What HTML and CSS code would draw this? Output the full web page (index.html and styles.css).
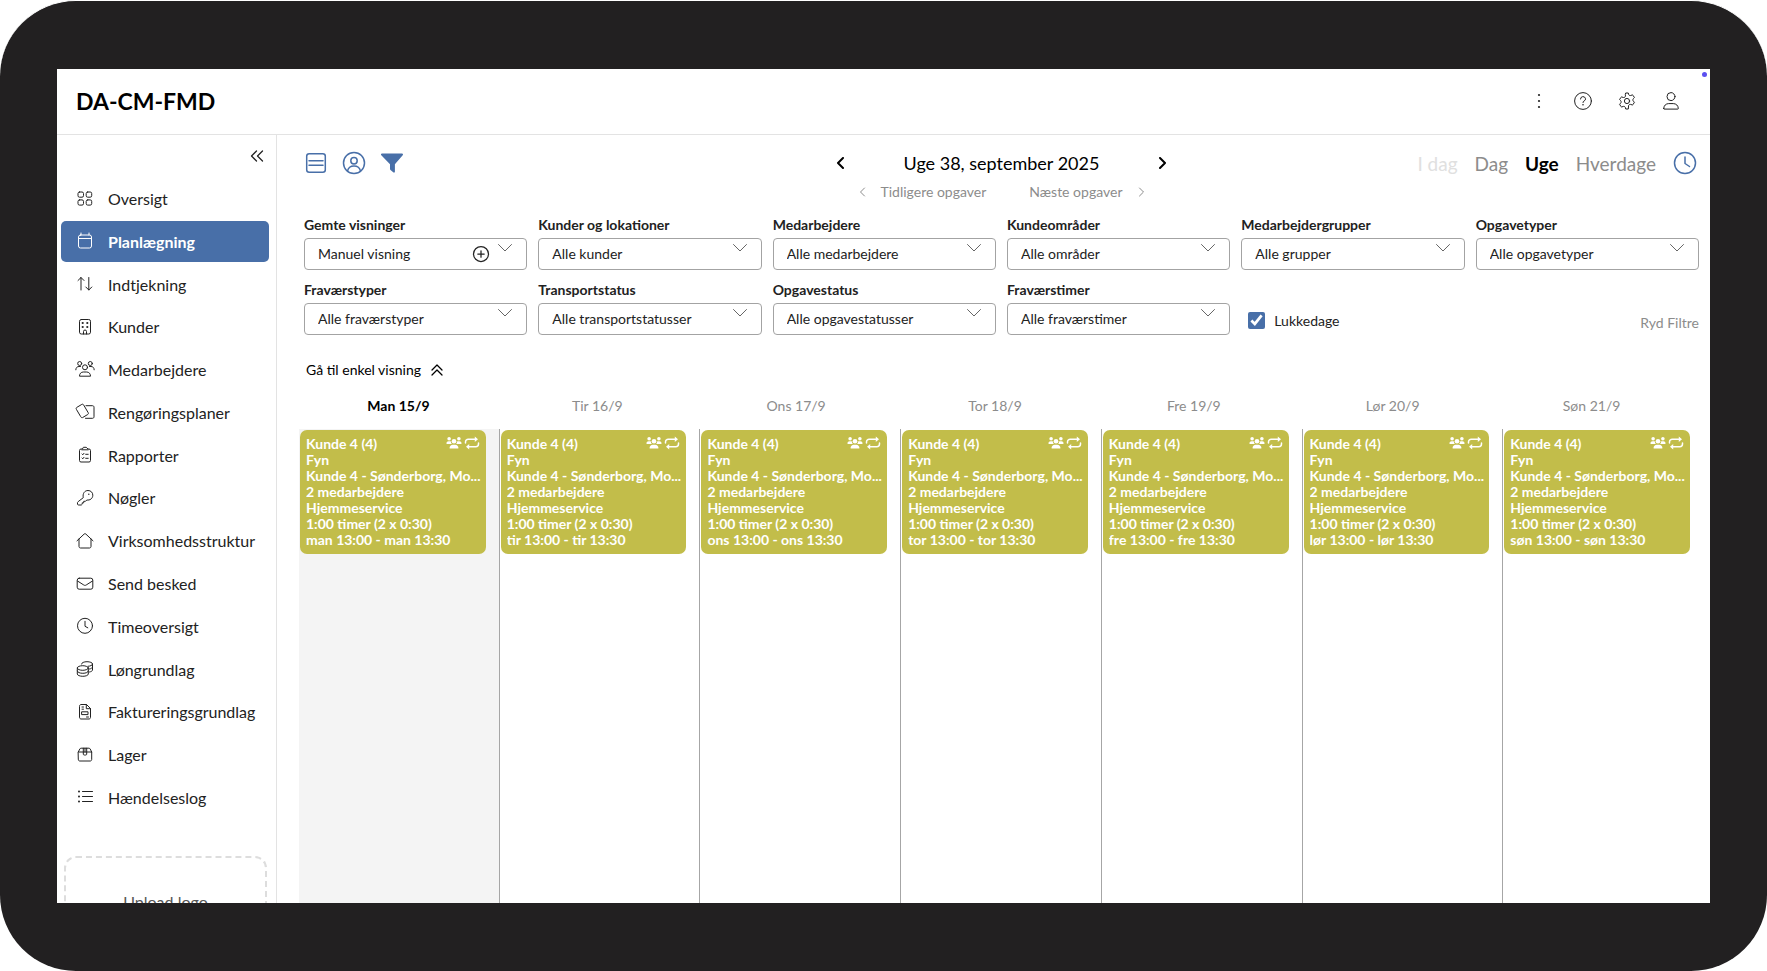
FILE: index.html
```html
<!DOCTYPE html>
<html lang="da">
<head>
  <meta charset="UTF-8">
  <meta name="viewport" content="width=device-width, initial-scale=1.0">
  <title>DA-CM-FMD - Planlægning</title>
  <link rel="stylesheet" href="styles.css">
</head>
<body>
  <!-- Shared icons -->
  <svg class="sprite" aria-hidden="true">
    <symbol id="chevron" viewBox="0 0 16 10"><path d="M1.500 1.500 8 8l6.500-6.500"/></symbol>
    <symbol id="clock" viewBox="0 0 24 24"><circle cx="12" cy="12" r="10.500"/><path d="M12 6v6.500l4.500 3"/></symbol>
    <symbol id="group" viewBox="0 0 18 14">
      <circle cx="3.500" cy="2.300" r="2"/><circle cx="14.500" cy="2.300" r="2"/><circle cx="9" cy="5" r="2.600"/>
      <path d="M.5 7.500C.5 6 1.500 5 3 5h1.300c.5 0 .9.1 1.200.3C5.600 6.500 6 7.400 6.600 8H1a.5.5 0 0 1-.5-.5zM17.500 7.500C17.500 6 16.500 5 15 5h-1.300c-.5 0-.9.1-1.200.3-.1 1.200-.5 2.100-1.100 2.700H17a.5.5 0 0 0 .5-.5zM4 12.500c0-2 1.600-3.600 3.600-3.600h2.800c2 0 3.600 1.600 3.600 3.600 0 .5-.3.800-.8.800H4.800c-.5 0-.8-.3-.8-.8z"/>
    </symbol>
    <symbol id="repeat" viewBox="0 0 16 14">
      <path class="line" d="M1.500 7V6c0-1.600 1.200-2.700 2.700-2.700h7.300M14.500 7v1c0 1.600-1.200 2.700-2.700 2.700H4.500"/>
      <path d="M10.800.5 14 3.300l-3.200 2.800zM5.200 7.900 2 10.700l3.200 2.800z"/>
    </symbol>
  </svg>

  <div class="device">
    <div class="screen">
      <header class="topbar">
        <h1>DA-CM-FMD</h1>
        <div class="topbar-actions">
          <button type="button" aria-label="Mere"><svg viewBox="0 0 20 20"><g class="solid"><circle cx="10" cy="4" r="1.100"/><circle cx="10" cy="10" r="1.100"/><circle cx="10" cy="16" r="1.100"/></g></svg></button>
          <button type="button" aria-label="Hjælp"><svg viewBox="0 0 20 20"><circle cx="10" cy="10" r="8.400"/><path d="M7.500 8a2.500 2.300 0 1 1 3.600 2c-.8.4-1.100.8-1.100 1.500"/><circle class="solid" cx="10" cy="13.800" r=".8"/></svg></button>
          <button type="button" aria-label="Indstillinger"><svg viewBox="0 0 20 20"><circle cx="10" cy="10" r="2.600"/><path d="M8.400 3.300 8.700 2h2.600l.3 1.300c.2.900 1.100 1.500 2 1.200l1.500-.5c.4-.1.800 0 1 .4l1.300 2.200-1 1c-.7.700-.7 1.900 0 2.600l1 1-1.300 2.300c-.2.300-.6.500-1 .4l-1.500-.5c-.9-.2-1.800.3-2 1.200L11.300 18H8.700l-.3-1.400c-.2-.9-1.100-1.400-2-1.200l-1.500.5c-.4.100-.8-.1-1-.4l-1.300-2.300 1-1c.7-.7.7-1.900 0-2.600l-1-1 1.300-2.200c.2-.4.600-.5 1-.4l1.500.5c.9.300 1.800-.3 2-1.200z"/></svg></button>
          <button type="button" aria-label="Profil"><svg viewBox="0 0 20 20"><circle cx="10" cy="5.600" r="4"/><path d="M2.700 17.600c0-3 2.200-5 5-5h4.600c2.800 0 5 2 5 5 0 .3-.2.500-.5.500H3.200c-.3 0-.5-.2-.5-.5z"/></svg></button>
        </div>
        <span class="status-dot"></span>
      </header>

      <div class="body">
        <aside class="sidebar">
          <button type="button" class="collapse" aria-label="Skjul menu"><svg viewBox="0 0 14 12"><path d="M6.500 1 1.500 6l5 5M12.500 1l-5 5 5 5"/></svg></button>
          <nav class="menu">
            <a href="#"><svg viewBox="0 0 20 20"><rect x="3" y="3" width="5.500" height="5.200" rx="1.500"/><rect x="11.200" y="3" width="5.500" height="5.200" rx="1.500"/><rect x="3" y="10.900" width="5.500" height="5.200" rx="1.500"/><rect x="11.200" y="10.900" width="5.500" height="5.200" rx="1.500"/></svg>Oversigt</a>
            <a href="#" class="active"><svg viewBox="0 0 20 20"><rect x="3.500" y="4" width="13" height="13" rx="2"/><path d="M3.500 7.500h13M6 2v2M14 2v2"/></svg>Planlægning</a>
            <a href="#"><svg viewBox="0 0 20 20"><path d="M6 16V3.500M3 6.500l3-3 3 3M13.800 3.500V16M10.800 13l3 3 3-3"/></svg>Indtjekning</a>
            <a href="#"><svg viewBox="0 0 20 20"><rect x="4.500" y="2.500" width="11" height="14.500" rx="1.800"/><path d="M8.500 17v-2.500a1.500 1.500 0 0 1 3 0V17"/><g class="solid"><circle cx="7.700" cy="6" r="1.100"/><circle cx="12.300" cy="6" r="1.100"/><circle cx="7.700" cy="10" r="1.100"/><circle cx="12.300" cy="10" r="1.100"/></g></svg>Kunder</a>
            <a href="#"><svg viewBox="0 0 20 20"><circle cx="4.700" cy="3.500" r="2"/><circle cx="15.300" cy="3.500" r="2"/><circle cx="10" cy="7.300" r="2.500"/><path d="M.8 9.800c0-2 1.300-3.300 3.200-3.300h1.500M19.200 9.800c0-2-1.300-3.300-3.200-3.300h-1.500M4.500 15.800c0-2 1.500-3.800 3.800-3.800h3.400c2.300 0 3.800 1.800 3.800 3.800z"/></svg>Medarbejdere</a>
            <a href="#"><svg viewBox="0 0 20 20"><path d="M1.300 7.200c-.4-.7-.2-1.400.5-1.800l5-3c.7-.4 1.400-.2 1.800.5l4.600 7.800c.4.700.2 1.400-.5 1.800l-5 3c-.7.400-1.400.2-1.800-.5zM11 3.700h6.500c.9 0 1.500.6 1.500 1.500v9.600c0 .9-.6 1.500-1.500 1.500h-7"/></svg>Rengøringsplaner</a>
            <a href="#"><svg viewBox="0 0 20 20"><path d="M7 4H6a1.500 1.500 0 0 0-1.500 1.500v10A1.500 1.500 0 0 0 6 17h8a1.500 1.500 0 0 0 1.500-1.500v-10A1.500 1.500 0 0 0 14 4h-1l-1.800-1.700h-2.400zM6.800 4.800h6.400M7 9l.8.800L9 8.300M7 13l.8.800L9 12.300M10.700 9.300h2.500M10.700 13.300h2.500"/></svg>Rapporter</a>
            <a href="#"><svg viewBox="0 0 20 20"><path d="M8.200 9.300c-.8-3.800 1.500-6.800 4.800-6.800 2.800 0 4.800 2 4.800 4.700 0 3.300-2.800 5.300-6 4.800l-1.300 1.300H8.700v1.500H7.200v1.400l-.9.800H3.500c-.6 0-1-.4-1-1v-1.200c0-.4.100-.6.400-.9z"/><circle class="solid" cx="13.800" cy="6.300" r=".7"/></svg>Nøgler</a>
            <a href="#"><svg viewBox="0 0 20 20"><path d="M2 9.800 9.200 3c.5-.4 1.100-.4 1.600 0L18 9.800M4 8v7.500c0 .8.700 1.500 1.500 1.500h9c.8 0 1.500-.7 1.500-1.500V8"/></svg>Virksomhedsstruktur</a>
            <a href="#"><svg viewBox="0 0 20 20"><rect x="2.200" y="4.200" width="15.600" height="11" rx="2"/><path d="m2.500 7 6.300 4c.8.500 1.600.5 2.400 0l6.300-4"/></svg>Send besked</a>
            <a href="#"><svg viewBox="0 0 20 20"><circle cx="10" cy="9.800" r="7.500"/><path d="M10 5.300v5l2.800 1.500"/></svg>Timeoversigt</a>
            <a href="#"><svg viewBox="0 0 20 20"><ellipse cx="7.800" cy="9" rx="5.500" ry="2.300"/><path d="M2.300 9v6c0 1.300 2.500 2.300 5.500 2.300s5.500-1 5.500-2.300V9M2.300 12c0 1.300 2.500 2.300 5.500 2.300s5.500-1 5.500-2.300M6.500 5c0-1.300 2.500-2.300 5.500-2.300s5.500 1 5.500 2.300-2.300 2.200-4.500 2.300M17.500 5v6c0 .9-1.200 1.700-3 2M17.500 8c0 .9-1.200 1.700-3 2"/></svg>Løngrundlag</a>
            <a href="#"><svg viewBox="0 0 20 20"><path d="M4.500 4c0-.8.700-1.500 1.500-1.500h5.500l4 4V15.500c0 .8-.7 1.500-1.500 1.500H6c-.8 0-1.500-.7-1.500-1.500zM11.300 2.500v4.200h4.200M7 5h1.500M7 7.200h1.500M11.500 15h2"/><rect x="7" y="9.800" width="6" height="2.800"/></svg>Faktureringsgrundlag</a>
            <a href="#"><svg viewBox="0 0 20 20"><path d="M3.300 7 4.800 4c.3-.6.700-.8 1.300-.8h7.800c.6 0 1 .2 1.300.8l1.500 3v7.500c0 .9-.7 1.500-1.500 1.500H4.800c-.9 0-1.500-.6-1.500-1.500zM3.300 7h13.400M8.300 3.200v6c0 .5.400.8 1 .8h1.400c.6 0 1-.3 1-.8v-6M10 3.200V7"/></svg>Lager</a>
            <a href="#"><svg viewBox="0 0 20 20"><path d="M7.500 4.500h10M7.500 9.500h10M7.500 14.500h10"/><g class="solid"><circle cx="4" cy="4.500" r="1"/><circle cx="4" cy="9.500" r="1"/><circle cx="4" cy="14.500" r="1"/></g></svg>Hændelseslog</a>
          </nav>
          <button type="button" class="upload">Upload logo</button>
        </aside>

        <main class="main">
          <div class="toolbar">
            <div class="tools">
              <button type="button" aria-label="Listevisning"><svg viewBox="0 0 24 24"><rect x="2.700" y="2.700" width="18.600" height="18.600" rx="2.500"/><path d="M5 9.800h14M5 14.200h14"/></svg></button>
              <button type="button" aria-label="Medarbejdervisning"><svg viewBox="0 0 24 24"><circle cx="12" cy="12" r="10.500"/><circle cx="12" cy="9.800" r="3.200"/><path d="M5.500 20c.7-3.200 3-5 6.500-5s5.800 1.800 6.500 5"/></svg></button>
              <button type="button" aria-label="Filter"><svg viewBox="0 0 24 24"><path class="solid" d="M2 2.500h20c1 0 1.300 1 .7 1.700l-7.800 9v7.500c0 .8-.8 1.200-1.400.7l-3-2.400a1.500 1.500 0 0 1-.5-1.100v-4.700L1.300 4.200C.7 3.500 1 2.500 2 2.500z"/></svg></button>
            </div>
            <div class="period">
              <div class="period-week">
                <button type="button" aria-label="Forrige uge"><svg viewBox="0 0 8 12"><path d="M6.500 1 1.500 6l5 5"/></svg></button>
                <h2>Uge 38, september 2025</h2>
                <button type="button" aria-label="Næste uge"><svg viewBox="0 0 8 12"><path d="m1.500 1 5 5-5 5"/></svg></button>
              </div>
              <div class="period-tasks">
                <button type="button"><svg viewBox="0 0 8 12"><path d="m6.500 2-4 4 4 4"/></svg>Tidligere opgaver</button>
                <button type="button">Næste opgaver<svg viewBox="0 0 8 12"><path d="m1.500 2 4 4-4 4"/></svg></button>
              </div>
            </div>
            <div class="ranges">
              <button type="button" disabled>I dag</button>
              <button type="button">Dag</button>
              <button type="button" class="active">Uge</button>
              <button type="button">Hverdage</button>
              <button type="button" class="range-clock" aria-label="Tid"><svg><use href="#clock"/></svg></button>
            </div>
          </div>

          <form class="filters">
            <div class="filter">
              <label for="views">Gemte visninger</label>
              <div class="select">
                <select id="views"><option>Manuel visning</option></select>
                <button type="button" class="add" aria-label="Gem visning"><svg viewBox="0 0 18 18"><circle cx="9" cy="9" r="7.500"/><path d="M9 5.800v6.400M5.800 9h6.400"/></svg></button>
                <svg class="arrow"><use href="#chevron"/></svg>
              </div>
            </div>
            <div class="filter">
              <label for="customers">Kunder og lokationer</label>
              <div class="select"><select id="customers"><option>Alle kunder</option></select><svg class="arrow"><use href="#chevron"/></svg></div>
            </div>
            <div class="filter">
              <label for="employees">Medarbejdere</label>
              <div class="select"><select id="employees"><option>Alle medarbejdere</option></select><svg class="arrow"><use href="#chevron"/></svg></div>
            </div>
            <div class="filter">
              <label for="areas">Kundeområder</label>
              <div class="select"><select id="areas"><option>Alle områder</option></select><svg class="arrow"><use href="#chevron"/></svg></div>
            </div>
            <div class="filter">
              <label for="groups">Medarbejdergrupper</label>
              <div class="select"><select id="groups"><option>Alle grupper</option></select><svg class="arrow"><use href="#chevron"/></svg></div>
            </div>
            <div class="filter">
              <label for="tasktypes">Opgavetyper</label>
              <div class="select"><select id="tasktypes"><option>Alle opgavetyper</option></select><svg class="arrow"><use href="#chevron"/></svg></div>
            </div>
            <div class="filter">
              <label for="absence">Fraværstyper</label>
              <div class="select"><select id="absence"><option>Alle fraværstyper</option></select><svg class="arrow"><use href="#chevron"/></svg></div>
            </div>
            <div class="filter">
              <label for="transport">Transportstatus</label>
              <div class="select"><select id="transport"><option>Alle transportstatusser</option></select><svg class="arrow"><use href="#chevron"/></svg></div>
            </div>
            <div class="filter">
              <label for="taskstatus">Opgavestatus</label>
              <div class="select"><select id="taskstatus"><option>Alle opgavestatusser</option></select><svg class="arrow"><use href="#chevron"/></svg></div>
            </div>
            <div class="filter">
              <label for="hours">Fraværstimer</label>
              <div class="select"><select id="hours"><option>Alle fraværstimer</option></select><svg class="arrow"><use href="#chevron"/></svg></div>
            </div>
            <label class="check"><input type="checkbox" checked>Lukkedage</label>
            <button type="reset" class="clear">Ryd Filtre</button>
          </form>

          <button type="button" class="simple-view">Gå til enkel visning<svg viewBox="0 0 12 14"><path d="m1 7 5-5 5 5M1 12l5-5 5 5"/></svg></button>

          <div class="week-head">
            <h3 class="today">Man 15/9</h3>
            <h3>Tir 16/9</h3>
            <h3>Ons 17/9</h3>
            <h3>Tor 18/9</h3>
            <h3>Fre 19/9</h3>
            <h3>Lør 20/9</h3>
            <h3>Søn 21/9</h3>
          </div>
          <div class="week">
            <div class="lane today">
              <article class="task">
                <div class="task-icons"><svg><use href="#group"/></svg><svg><use href="#repeat"/></svg></div>
                <p>Kunde 4 (4)</p>
                <p>Fyn</p>
                <p>Kunde 4 - Sønderborg, Mo...</p>
                <p>2 medarbejdere</p>
                <p>Hjemmeservice</p>
                <p>1:00 timer (2 x 0:30)</p>
                <p>man 13:00 - man 13:30</p>
              </article>
            </div>
            <div class="lane">
              <article class="task">
                <div class="task-icons"><svg><use href="#group"/></svg><svg><use href="#repeat"/></svg></div>
                <p>Kunde 4 (4)</p>
                <p>Fyn</p>
                <p>Kunde 4 - Sønderborg, Mo...</p>
                <p>2 medarbejdere</p>
                <p>Hjemmeservice</p>
                <p>1:00 timer (2 x 0:30)</p>
                <p>tir 13:00 - tir 13:30</p>
              </article>
            </div>
            <div class="lane">
              <article class="task">
                <div class="task-icons"><svg><use href="#group"/></svg><svg><use href="#repeat"/></svg></div>
                <p>Kunde 4 (4)</p>
                <p>Fyn</p>
                <p>Kunde 4 - Sønderborg, Mo...</p>
                <p>2 medarbejdere</p>
                <p>Hjemmeservice</p>
                <p>1:00 timer (2 x 0:30)</p>
                <p>ons 13:00 - ons 13:30</p>
              </article>
            </div>
            <div class="lane">
              <article class="task">
                <div class="task-icons"><svg><use href="#group"/></svg><svg><use href="#repeat"/></svg></div>
                <p>Kunde 4 (4)</p>
                <p>Fyn</p>
                <p>Kunde 4 - Sønderborg, Mo...</p>
                <p>2 medarbejdere</p>
                <p>Hjemmeservice</p>
                <p>1:00 timer (2 x 0:30)</p>
                <p>tor 13:00 - tor 13:30</p>
              </article>
            </div>
            <div class="lane">
              <article class="task">
                <div class="task-icons"><svg><use href="#group"/></svg><svg><use href="#repeat"/></svg></div>
                <p>Kunde 4 (4)</p>
                <p>Fyn</p>
                <p>Kunde 4 - Sønderborg, Mo...</p>
                <p>2 medarbejdere</p>
                <p>Hjemmeservice</p>
                <p>1:00 timer (2 x 0:30)</p>
                <p>fre 13:00 - fre 13:30</p>
              </article>
            </div>
            <div class="lane">
              <article class="task">
                <div class="task-icons"><svg><use href="#group"/></svg><svg><use href="#repeat"/></svg></div>
                <p>Kunde 4 (4)</p>
                <p>Fyn</p>
                <p>Kunde 4 - Sønderborg, Mo...</p>
                <p>2 medarbejdere</p>
                <p>Hjemmeservice</p>
                <p>1:00 timer (2 x 0:30)</p>
                <p>lør 13:00 - lør 13:30</p>
              </article>
            </div>
            <div class="lane">
              <article class="task">
                <div class="task-icons"><svg><use href="#group"/></svg><svg><use href="#repeat"/></svg></div>
                <p>Kunde 4 (4)</p>
                <p>Fyn</p>
                <p>Kunde 4 - Sønderborg, Mo...</p>
                <p>2 medarbejdere</p>
                <p>Hjemmeservice</p>
                <p>1:00 timer (2 x 0:30)</p>
                <p>søn 13:00 - søn 13:30</p>
              </article>
            </div>
          </div>
        </main>
      </div>
    </div>
  </div>
</body>
</html>
```

FILE: styles.css
```css
* {
  box-sizing: border-box;
}

body {
  font-family: Lato, "Open Sans", sans-serif;
  color: #222;
  background-color: #fff;
  margin: 0;
}

h1, h2, h3, p {
  margin: 0;
}

button, select, input {
  font: inherit;
  color: inherit;
  margin: 0;
}

button {
  background: none;
  border: 0;
  padding: 0;
  cursor: pointer;
}

svg {
  display: block;
  flex-shrink: 0;
  fill: none;
  stroke: currentColor;
  stroke-linecap: round;
  stroke-linejoin: round;
}

.solid {
  fill: currentColor;
  stroke: none;
}

.sprite {
  position: absolute;
  width: 0;
  height: 0;
}

/* Device frame */
.device {
  height: 100vh;
  background-color: #222021;
  border-top: 1px solid #fff;
  border-radius: 76px;
  padding: 68px 57px;
}

.screen {
  position: relative;
  height: 100%;
  background-color: #fff;
  display: flex;
  flex-direction: column;
  overflow: hidden;
}

/* Top bar */
.topbar {
  flex-shrink: 0;
  height: 66px;
  display: flex;
  align-items: center;
  justify-content: space-between;
  padding: 0 29px 2px 19px;
  border-bottom: 1px solid #e3e3e3;
}

.topbar h1 {
  font-size: 23px;
  color: #000;
}

.topbar-actions {
  display: flex;
  gap: 24px;
}

.topbar-actions svg {
  width: 20px;
  height: 20px;
}

.status-dot {
  position: absolute;
  top: 3px;
  right: 3px;
  width: 5px;
  height: 5px;
  border-radius: 50%;
  background-color: #5b50f0;
}

.body {
  flex: 1;
  min-height: 0;
  display: flex;
}

/* Sidebar */
.sidebar {
  flex-shrink: 0;
  width: 220px;
  border-right: 1px solid #e3e3e3;
  padding: 15px 7px 0 4px;
  display: flex;
  flex-direction: column;
}

.collapse {
  align-self: flex-end;
  padding: 0 5px;
}

.collapse svg {
  width: 14px;
  height: 12px;
  stroke-width: 1.25;
}

.menu {
  flex-shrink: 0;
  height: 640px;
  margin-top: 16px;
  display: flex;
  flex-direction: column;
  justify-content: space-between;
}

.menu a {
  height: 41px;
  display: flex;
  align-items: center;
  gap: 13px;
  padding-left: 14px;
  border-radius: 5px;
  font-size: 16px;
  color: #222;
  text-decoration: none;
}

.menu svg {
  width: 20px;
  height: 20px;
}

.menu a.active {
  background-color: #486fa8;
  color: #fff;
  font-weight: bold;
}

.upload {
  flex-shrink: 0;
  height: 90px;
  margin: 38px 2px 0 3px;
  border: 2px dashed #ddd;
  border-radius: 12px;
  font-size: 16px;
  color: #555;
}

/* Main area */
.main {
  flex: 1;
  min-width: 0;
  display: flex;
  flex-direction: column;
  padding: 16px 11px 0 27px;
}

.toolbar {
  display: grid;
  grid-template-columns: 1fr auto 1fr;
  align-items: start;
}

.tools {
  display: flex;
  gap: 14px;
  color: #486fa8;
}

.tools svg,
.range-clock svg {
  width: 24px;
  height: 24px;
  stroke-width: 1.5;
}

.period {
  width: 332px;
}

.period-week {
  display: flex;
  justify-content: space-between;
  align-items: center;
  height: 24px;
  color: #000;
}

.period-week h2 {
  font-size: 18px;
  font-weight: normal;
}

.period-week svg {
  width: 9px;
  height: 12px;
  stroke-width: 2;
}

.period-tasks {
  display: flex;
  justify-content: space-between;
  padding: 8px 22px 0;
  color: #8c8c8c;
  font-size: 14px;
  line-height: 18px;
}

.period-tasks button {
  display: flex;
  align-items: center;
  gap: 15px;
}

.period-tasks svg {
  width: 8px;
  height: 12px;
}

.ranges {
  display: flex;
  justify-content: flex-end;
  align-items: center;
  gap: 17px;
  height: 24px;
  padding-right: 2px;
  font-size: 19px;
  color: #8c8c8c;
}

.ranges button:disabled {
  color: #e0e0e0;
}

.ranges .active {
  color: #000;
  font-weight: bold;
}

.range-clock {
  color: #486fa8;
}

/* Filters */
.filters {
  display: grid;
  grid-template-columns: repeat(6, 1fr);
  gap: 11px;
  margin-top: 15px;
  font-size: 14px;
}

.filter label {
  display: block;
  font-weight: bold;
  line-height: 18px;
  margin-bottom: 4px;
}

.select {
  position: relative;
}

.select select {
  display: block;
  width: 100%;
  height: 32px;
  padding: 0 44px 1px 13px;
  border: 1px solid #a3a3a3;
  border-radius: 4px;
  background-color: #fff;
  appearance: none;
}

.arrow {
  position: absolute;
  top: 5px;
  right: 14px;
  width: 16px;
  height: 10px;
  color: #666;
  pointer-events: none;
}

.add {
  position: absolute;
  top: 7px;
  right: 37px;
}

.add svg {
  width: 18px;
  height: 18px;
  stroke-width: 1.25;
}

.check {
  align-self: end;
  height: 30px;
  padding-left: 7px;
  display: flex;
  align-items: center;
  gap: 9px;
}

.check input {
  width: 17px;
  height: 17px;
  accent-color: #486fa8;
}

.clear {
  align-self: end;
  justify-self: end;
  height: 26px;
  color: #8c8c8c;
}

.simple-view {
  align-self: flex-start;
  display: flex;
  align-items: center;
  gap: 10px;
  margin: 26px 0 0 2px;
  font-size: 14px;
  line-height: 18px;
  color: #000;
}

.simple-view svg {
  width: 12px;
  height: 14px;
  stroke-width: 1.25;
}

/* Week calendar */
.week-head {
  display: grid;
  grid-template-columns: repeat(7, 1fr);
  margin: 18px 8px 14px -5px;
}

.week-head h3 {
  font-size: 14px;
  font-weight: normal;
  line-height: 18px;
  text-align: center;
  color: #8c8c8c;
}

.week-head .today {
  font-weight: bold;
  color: #000;
}

.week {
  flex: 1;
  display: grid;
  grid-template-columns: repeat(7, 1fr);
  margin: 0 -5px;
}

.lane {
  min-width: 0;
  padding: 1px 13px 0 1px;
  border-right: 1px solid #a6a6a6;
}

.lane:last-child {
  border-right-color: transparent;
}

.lane.today {
  background-color: #f4f4f4;
}

.task {
  position: relative;
  padding: 6px 4px 6px 6px;
  border-radius: 7px;
  background-color: #c2bd4a;
  color: #fff;
  font-size: 14px;
  font-weight: bold;
  line-height: 16px;
}

.task p {
  overflow: hidden;
  white-space: nowrap;
  text-overflow: ellipsis;
}

.task-icons {
  position: absolute;
  top: 6px;
  right: 6px;
  display: flex;
  gap: 2px;
}

.task-icons svg {
  width: 16px;
  height: 14px;
  fill: currentColor;
  stroke: none;
}

.line {
  fill: none;
  stroke: currentColor;
  stroke-width: 1.5;
}
```
